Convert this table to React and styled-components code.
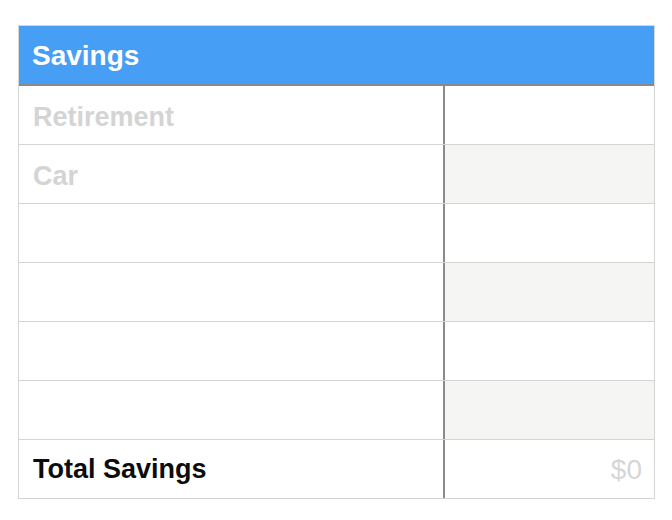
import React from "react";
import styled, { createGlobalStyle } from "styled-components";

const Global = createGlobalStyle`
  html, body { margin: 0; padding: 0; background: #ffffff; }
  body { font-family: "Liberation Sans", Arial, sans-serif; }
`;

const Page = styled.div`
  padding: 25px 0 0 18px;
`;

const Table = styled.div`
  width: 637px;
  box-sizing: border-box;
  border: 1px solid #d6d6d6;
  border-bottom: none;
`;

const Header = styled.div`
  height: 58px;
  background: #469ef5;
  border-bottom: 2px solid #8a8a8a;
  display: flex;
  align-items: center;
  padding: 1px 0 0 13px;
  box-sizing: border-box;
  height: 60px;
  color: #ffffff;
  font-weight: 700;
  font-size: 28px;
`;

const Row = styled.div`
  display: flex;
  height: 58px;
  border-bottom: 1px solid #d4d4d4;
`;

const LabelCell = styled.div`
  width: 424px;
  display: flex;
  align-items: center;
  padding: ${(p) => (p.$total ? "1px 0 0 14px" : "4px 0 0 14px")};
  box-sizing: border-box;
  font-size: 27px;
  font-weight: 700;
  color: ${(p) => (p.$total ? "#0c0c0c" : "#d4d4d4")};
`;

const ValueCell = styled.div`
  flex: 1;
  border-left: 2px solid #8a8a8a;
  background: ${(p) => (p.$shade ? "#f5f5f3" : "#ffffff")};
  display: flex;
  align-items: center;
  justify-content: flex-end;
  padding: 1px 12px 0 0;
  font-size: 28px;
  color: #d6d6d6;
`;

const rows = ["Retirement", "Car", "", "", "", ""];

export default function App() {
  return (
    <>
      <Global />
      <Page>
        <Table>
          <Header>Savings</Header>
          {rows.map((label, i) => (
            <Row key={i}>
              <LabelCell>{label}</LabelCell>
              <ValueCell $shade={i % 2 === 1} />
            </Row>
          ))}
          <Row>
            <LabelCell $total>Total Savings</LabelCell>
            <ValueCell>$0</ValueCell>
          </Row>
        </Table>
      </Page>
    </>
  );
}
